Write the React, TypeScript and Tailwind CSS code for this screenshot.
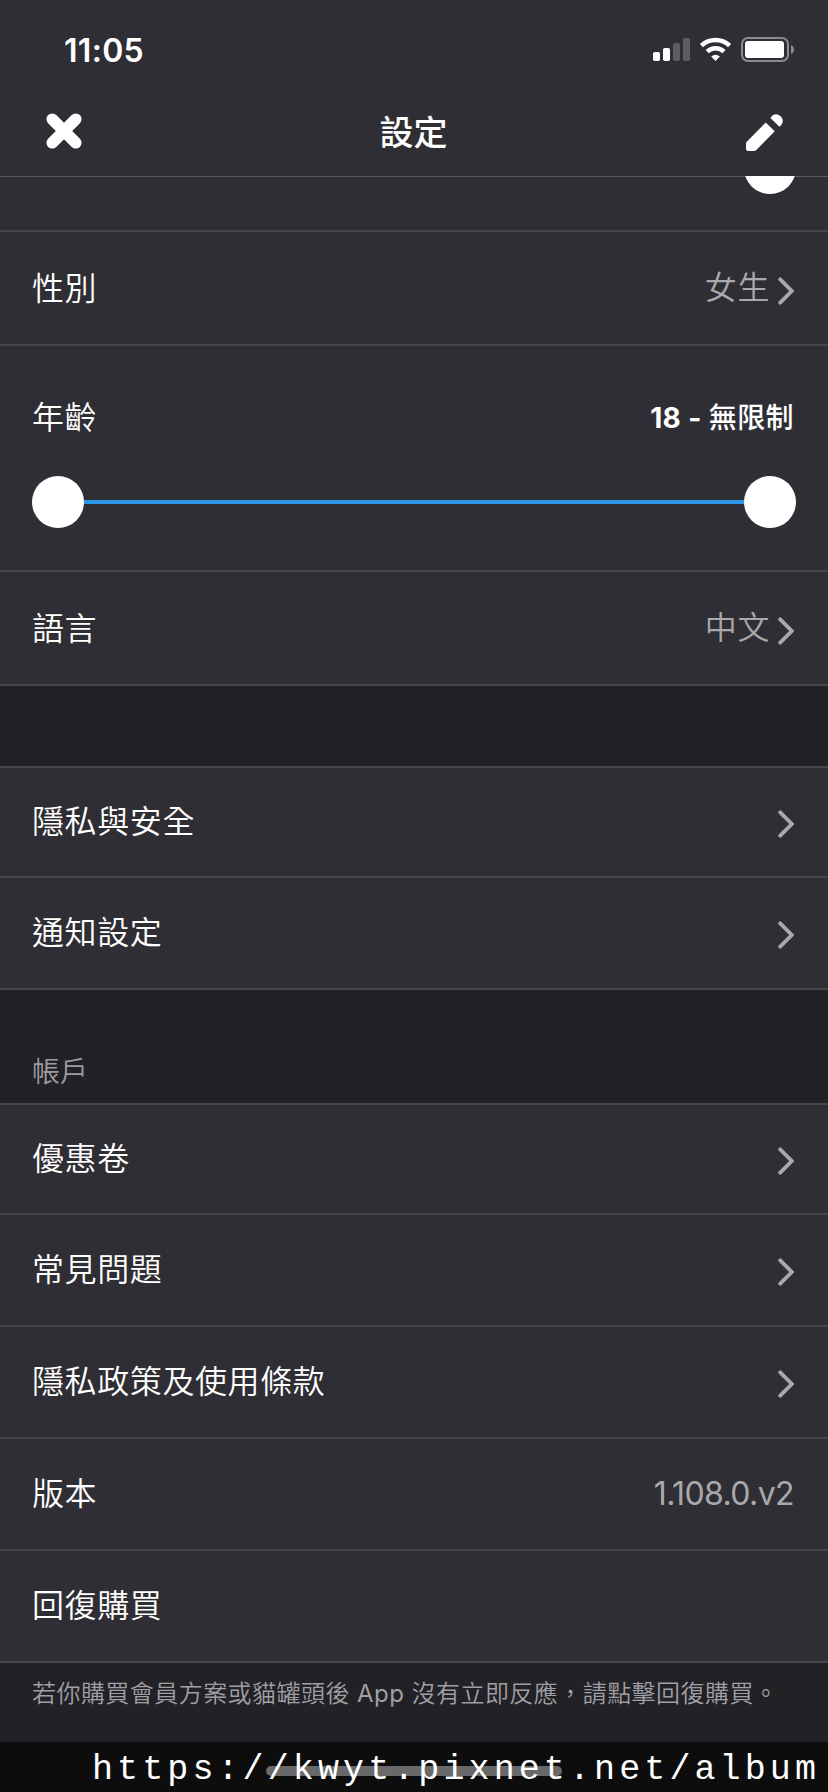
import type { ReactNode } from "react";

function StatusIcons() {
  return (
    <svg className="h-[26px] w-[142px]" viewBox="653 37 142 26" fill="none">
      <rect x="653" y="52" width="7" height="9" rx="1.8" fill="#fff" />
      <rect x="663" y="48" width="7" height="13" rx="1.8" fill="#fff" />
      <rect x="673" y="43" width="7" height="18" rx="1.8" fill="#5d5c61" />
      <rect x="683" y="38" width="7" height="23" rx="1.8" fill="#5d5c61" />
      <path d="M701.4 45.6A20.4 20.4 0 0 1 729.6 45.6" stroke="#fff" strokeWidth="4.6" />
      <path d="M707.2 51.6A12.4 12.4 0 0 1 724 51.6" stroke="#fff" strokeWidth="4.4" />
      <path d="M711.2 56.4Q715.5 53.2 719.9 56.4L715.5 61Z" fill="#fff" />
      <rect x="742" y="38" width="46" height="23" rx="6" stroke="#8b8b8e" strokeWidth="2" />
      <rect x="745" y="41" width="39" height="17" rx="3" fill="#fff" />
      <path d="M791 45Q794 46.5 794 49.5Q794 52.5 791 54Z" fill="#8b8b8e" />
    </svg>
  );
}

function CloseIcon() {
  return (
    <svg className="h-9 w-9 overflow-visible" viewBox="0 0 36 36" fill="none" stroke="#fff" strokeWidth="11.6" strokeLinecap="round">
      <path d="M6.2 5.2L29.8 28.8M29.8 5.2L6.2 28.8" />
    </svg>
  );
}

function PencilIcon() {
  return (
    <svg className="h-10 w-10" viewBox="745 112 40 40" fill="#fff">
      <path d="M746 142.5L765.7 122.4L774.7 131.2L756.3 150Q755.2 151 753.6 151H748Q746 151 746 149Z" />
      <path d="M770.4 118L772.4 115.6A6.6 6.6 0 0 1 781.7 124.5L779.4 126.8Z" />
    </svg>
  );
}

function Chevron() {
  return (
    <svg className="mt-[5px] h-7 w-4" viewBox="0 0 16 28" fill="none" stroke="#a9a8ad" strokeWidth="3.8" strokeLinecap="round">
      <path d="M2.2 2.3L13.8 14L2.2 25.7" />
    </svg>
  );
}

function Row({ label, height, children }: { label: string; height: string; children?: ReactNode }) {
  return (
    <div className={`flex items-center justify-between border-b-2 border-[#46454b] bg-[#2f2e34] pl-8 pr-[34px] ${height}`}>
      <span className="pt-0.5 text-[32px] leading-[48px] tracking-[0.6px]">{label}</span>
      <div className="flex items-center gap-2 text-[32px] leading-[48px] text-[#a9a8ad]">{children}</div>
    </div>
  );
}

function Knob() {
  return <div className="h-[52px] w-[52px] rounded-full bg-white" />;
}

export default function App() {
  return (
    <div
      lang="zh-Hant"
      className="flex h-[1792px] w-[828px] flex-col overflow-hidden bg-[#222126] font-['Inter','Noto_Sans_CJK_TC',sans-serif] font-[350] text-white"
    >
      <header className="flex h-44 shrink-0 flex-col bg-[#2f2e34]">
        <div className="flex h-[88px] items-start justify-between pl-16 pr-[33px] pt-[37px]">
          <span className="pt-px text-[32px] font-semibold leading-[26px] tracking-[0.3px]">11:05</span>
          <StatusIcons />
        </div>
        <div className="grid h-[88px] grid-cols-3 items-center pl-[46px] pr-[43px]">
          <CloseIcon />
          <h1 className="pr-1 pt-0.5 text-center text-[34px] font-medium leading-[48px]">設定</h1>
          <div className="flex justify-end">
            <PencilIcon />
          </div>
        </div>
      </header>

      <main className="flex shrink-0 flex-col">
        <div className="flex h-14 items-start justify-end overflow-hidden border-b-2 border-b-[#46454b] bg-[#2f2e34] pr-8 shadow-[inset_0_1px_0_#5a595e]">
          <div className="-mt-[34px]">
            <Knob />
          </div>
        </div>
        <Row label="性別" height="h-[114px]">
          <span className="tracking-[0.6px]">女生</span>
          <Chevron />
        </Row>
        <section className="flex h-[226px] flex-col border-b-2 border-[#46454b] bg-[#2f2e34] px-8 pt-12">
          <div className="flex h-12 items-center justify-between pr-0.5">
            <span className="text-[32px] tracking-[0.6px]">年齡</span>
            <span className="text-[28px] font-medium tracking-[0.4px]">
              <span className="font-bold">18 - </span>無限制
            </span>
          </div>
          <div className="mt-[34px] flex items-center">
            <Knob />
            <div className="h-1 flex-1 bg-[#2e94e8]" />
            <Knob />
          </div>
        </section>
        <Row label="語言" height="h-[114px]">
          <span className="tracking-[0.6px]">中文</span>
          <Chevron />
        </Row>

        <section className="mt-20 border-t-2 border-[#46454b]">
          <Row label="隱私與安全" height="h-[110px] pb-0.5">
            <Chevron />
          </Row>
          <Row label="通知設定" height="h-[112px] pb-0.5">
            <Chevron />
          </Row>
        </section>

        <h2 className="flex h-[113px] items-end px-8 pb-[11px] text-[28px] leading-[40px] text-[#9d9ca1]">帳戶</h2>
        <section className="border-t-2 border-[#46454b]">
          <Row label="優惠卷" height="h-[110px] pb-0.5">
            <Chevron />
          </Row>
          <Row label="常見問題" height="h-[112px] pb-0.5">
            <Chevron />
          </Row>
          <Row label="隱私政策及使用條款" height="h-[112px] pb-0.5">
            <Chevron />
          </Row>
          <Row label="版本" height="h-[112px] pb-0.5">
            <span className="pt-0.5 font-normal tracking-[-0.6px]">1.108.0.v2</span>
          </Row>
          <Row label="回復購買" height="h-[112px] pb-0.5" />
        </section>
        <p className="h-[79px] whitespace-nowrap px-8 pt-[13px] text-[24px] leading-[36px] tracking-[0.45px] text-[#a09fa4]">
          若你購買會員方案或貓罐頭後 <span className="font-normal">App</span> 沒有立即反應，請點擊回復購買。
        </p>
      </main>

      <footer className="relative flex h-[50px] shrink-0 items-start justify-end bg-[#0d0d0e] pr-2">
        <div className="absolute left-[266px] top-6 h-[10px] w-[296px] rounded-full bg-[#69696a]" />
        <span className="relative whitespace-nowrap pt-[3px] font-['Liberation_Mono',monospace] text-[35px] leading-[50px] tracking-[4.1px]">
          https://kwyt.pixnet.net/album
        </span>
      </footer>
    </div>
  );
}
